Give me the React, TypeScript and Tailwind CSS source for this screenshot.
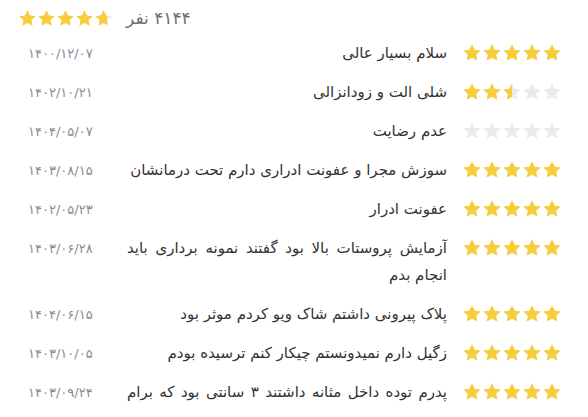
import React from "react";

const STAR =
  "M12 1.6l3.09 6.6 7.21.86-5.33 4.95 1.41 7.13L12 17.6l-6.38 3.54 1.41-7.13L1.7 9.06l7.21-.86z";

function StarRow({ value, size = 20 }: { value: number; size?: number }) {
  const pct = (value / 5) * 100;
  const stars = (color: string) => (
    <div className="flex shrink-0" style={{ width: size * 5 }}>
      {[0, 1, 2, 3, 4].map((i) => (
        <svg key={i} width={size} height={size} viewBox="0 0 24 24" className="shrink-0">
          <path d={STAR} fill={color} />
        </svg>
      ))}
    </div>
  );
  return (
    <div dir="ltr" className="relative shrink-0" style={{ width: size * 5, height: size }}>
      <div className="absolute inset-0">{stars("#ebebeb")}</div>
      <div className="absolute left-0 top-0 h-full overflow-hidden" style={{ width: `${pct}%` }}>
        {stars("#f7cd3a")}
      </div>
    </div>
  );
}

const reviews = [
  { r: 5, t: "سلام بسیار عالی", d: "۱۴۰۰/۱۲/۰۷" },
  { r: 2.5, t: "شلی الت و زودانزالی", d: "۱۴۰۲/۱۰/۲۱" },
  { r: 0, t: "عدم رضایت", d: "۱۴۰۴/۰۵/۰۷" },
  { r: 5, t: "سوزش مجرا و عفونت ادراری دارم تحت درمانشان", d: "۱۴۰۳/۰۸/۱۵" },
  { r: 5, t: "عفونت ادرار", d: "۱۴۰۲/۰۵/۲۳" },
  { r: 5, t: "آزمایش پروستات بالا بود گفتند نمونه برداری باید انجام بدم", d: "۱۴۰۳/۰۶/۲۸" },
  { r: 5, t: "پلاک پیرونی داشتم شاک ویو کردم موثر بود", d: "۱۴۰۴/۰۶/۱۵" },
  { r: 5, t: "زگیل دارم نمیدونستم چیکار کنم ترسیده بودم", d: "۱۴۰۳/۱۰/۰۵" },
  { r: 5, t: "پدرم توده داخل مثانه داشتند ۳ سانتی بود که برام", d: "۱۴۰۳/۰۹/۲۴", last: true },
];

export default function App() {
  return (
    <div
      dir="rtl"
      className="w-[588px] h-[417px] overflow-hidden bg-white"
      style={{ fontFamily: '"DejaVu Sans", sans-serif' }}
    >
      <div className="flex items-center justify-end gap-[13px] pl-[18px] pt-[6px] h-[30px]">
        <span className="text-[17px] leading-[24px] text-[#6e6e6e]">۴۱۴۴ نفر</span>
        <StarRow value={4.7} size={19} />
      </div>
      <div className="flex flex-col pr-[26px] pl-[28px] pt-[4px]">
        {reviews.map((rv, i) => (
          <div key={i} className="flex items-start gap-[15px] py-[6px]">
            <div className="pt-[3px] shrink-0">
              <StarRow value={rv.r} />
            </div>
            <p
              className={
                rv.last
                  ? "flex-1 text-[15px] leading-[27px] text-[#333] text-justify [text-align-last:justify]"
                  : "flex-1 text-[15px] leading-[27px] text-[#333] text-justify"
              }
            >
              {rv.t}
            </p>
            <div className="w-[84px] shrink-0 text-left text-[13px] leading-[27px] text-[#878c96]">
              {rv.d}
            </div>
          </div>
        ))}
      </div>
    </div>
  );
}
